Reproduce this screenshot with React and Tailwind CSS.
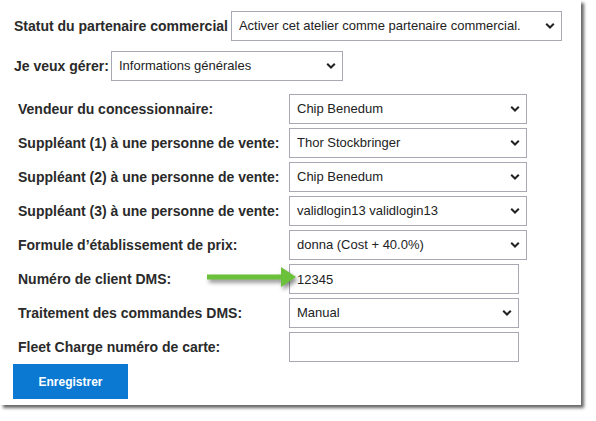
import React from 'react';

const Chevron = () => (
    <svg className="pointer-events-none absolute right-[7px] top-1/2 -translate-y-1/2" width="10" height="7" viewBox="0 0 10 7">
        <path d="M1.2 1.2 L5 5 L8.8 1.2" fill="none" stroke="#222" strokeWidth="2" />
    </svg>
);

const Select = ({ value, className }) => (
    <div className={`relative h-[30px] ${className}`}>
        <select defaultValue={value} className="h-full w-full appearance-none border border-[#a9a9b6] bg-white pl-[7px] pr-6 text-[13px] text-[#222] outline-none">
            <option value={value}>{value}</option>
        </select>
        <Chevron />
    </div>
);

const TextInput = ({ value }) => (
    <input type="text" defaultValue={value} className="h-[30px] w-[230px] border border-[#a9a9b6] bg-white pl-[7px] text-[13px] text-[#222] outline-none" />
);

const Row = ({ label, children }) => (
    <div className="flex h-[34px] items-center">
        <label className="w-[271px] shrink-0 text-[14px] font-bold text-[#2a2a2a]">{label}</label>
        {children}
    </div>
);

export default function App() {
    return (
        <div className="h-[421px] w-[596px] bg-white" style={{ fontFamily: '"Liberation Sans", Arial, sans-serif' }}>
            <div className="relative h-[405px] w-[581px] bg-white pt-[11px] shadow-[3px_3px_3px_rgba(0,0,0,0.6)]">
                <div className="flex items-center pl-[14px]">
                    <label className="mr-[3px] text-[14px] font-bold text-[#2a2a2a]">Statut du partenaire commercial</label>
                    <Select value="Activer cet atelier comme partenaire commercial." className="w-[331px]" />
                </div>

                <div className="mt-[10px] flex items-center pl-[14px]">
                    <label className="mr-[2px] text-[14px] font-bold text-[#2a2a2a]">Je veux gérer:</label>
                    <Select value="Informations générales" className="w-[232px]" />
                </div>

                <div className="mt-[11px] pl-[18px]">
                    <Row label="Vendeur du concessionnaire:"><Select value="Chip Benedum" className="w-[238px]" /></Row>
                    <Row label="Suppléant (1) à une personne de vente:"><Select value="Thor Stockbringer" className="w-[238px]" /></Row>
                    <Row label="Suppléant (2) à une personne de vente:"><Select value="Chip Benedum" className="w-[238px]" /></Row>
                    <Row label="Suppléant (3) à une personne de vente:"><Select value="validlogin13 validlogin13" className="w-[238px]" /></Row>
                    <Row label="Formule d’établissement de prix:"><Select value="donna (Cost + 40.0%)" className="w-[238px]" /></Row>
                    <Row label="Numéro de client DMS:"><TextInput value="12345" /></Row>
                    <Row label="Traitement des commandes DMS:"><Select value="Manual" className="w-[230px]" /></Row>
                    <Row label="Fleet Charge numéro de carte:"><TextInput value="" /></Row>
                </div>

                <div className="pl-[13px]">
                    <button className="h-[35px] w-[115px] bg-[#0b78d1] text-[12px] font-bold text-white">Enregistrer</button>
                </div>

                <svg className="absolute left-[205px] top-[265px]" width="94" height="28" viewBox="0 0 94 28" style={{ filter: 'drop-shadow(2px 3px 2px rgba(0,0,0,0.45))' }}>
                    <path d="M2 9.5 H76 V2 L91 12 L76 22 V14.5 H2 Z" fill="#6cc13a" />
                </svg>
            </div>
        </div>
    );
}
